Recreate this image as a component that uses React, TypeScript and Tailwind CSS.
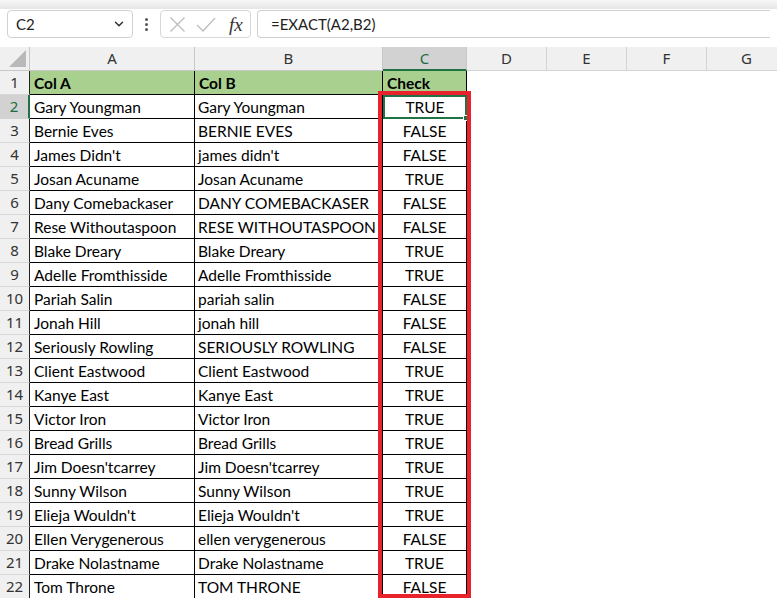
import { ChevronDown } from "lucide-react";

const rows: [string, string, string][] = [
  ["Gary Youngman", "Gary Youngman", "TRUE"],
  ["Bernie Eves", "BERNIE EVES", "FALSE"],
  ["James Didn't", "james didn't", "FALSE"],
  ["Josan Acuname", "Josan Acuname", "TRUE"],
  ["Dany Comebackaser", "DANY COMEBACKASER", "FALSE"],
  ["Rese Withoutaspoon", "RESE WITHOUTASPOON", "FALSE"],
  ["Blake Dreary", "Blake Dreary", "TRUE"],
  ["Adelle Fromthisside", "Adelle Fromthisside", "TRUE"],
  ["Pariah Salin", "pariah salin", "FALSE"],
  ["Jonah Hill", "jonah hill", "FALSE"],
  ["Seriously Rowling", "SERIOUSLY ROWLING", "FALSE"],
  ["Client Eastwood", "Client Eastwood", "TRUE"],
  ["Kanye East", "Kanye East", "TRUE"],
  ["Victor Iron", "Victor Iron", "TRUE"],
  ["Bread Grills", "Bread Grills", "TRUE"],
  ["Jim Doesn'tcarrey", "Jim Doesn'tcarrey", "TRUE"],
  ["Sunny Wilson", "Sunny Wilson", "TRUE"],
  ["Elieja Wouldn't", "Elieja Wouldn't", "TRUE"],
  ["Ellen Verygenerous", "ellen verygenerous", "FALSE"],
  ["Drake Nolastname", "Drake Nolastname", "TRUE"],
  ["Tom Throne", "TOM THRONE", "FALSE"],
];

const columns = ["D", "E", "F", "G"];

function FormulaBar() {
  return (
    <div className="flex h-[28px] items-stretch px-[7px] mt-[1px]">
      <div className="flex w-[126px] shrink-0 items-center justify-between rounded-[4px] border border-[#d1d1d1] pl-[8px] pr-[6px] text-[15px] text-[#222]">
        <span>C2</span>
        <ChevronDown size={14} strokeWidth={2.6} className="text-[#333]" />
      </div>
      <div className="flex w-[27px] shrink-0 flex-col items-center justify-center gap-[2px]">
        <span className="h-[3px] w-[3px] rounded-full bg-[#555]" />
        <span className="h-[3px] w-[3px] rounded-full bg-[#555]" />
        <span className="h-[3px] w-[3px] rounded-full bg-[#555]" />
      </div>
      <div className="flex w-[91px] shrink-0 items-center rounded-[4px] border border-[#d8d8d8] pl-[7px]">
        <svg width="17" height="17" viewBox="0 0 17 17" className="ml-[1px]">
          <path d="M1.5 1.5 L15.5 15.5 M15.5 1.5 L1.5 15.5" stroke="#bdbdbd" strokeWidth="1.3" fill="none" />
        </svg>
        <svg width="20" height="17" viewBox="0 0 20 17" className="ml-[10px]">
          <path d="M1 9 L7 15 L19 2" stroke="#bdbdbd" strokeWidth="1.3" fill="none" />
        </svg>
        <span className="ml-[13px] font-['Liberation_Serif',serif] text-[19px] italic leading-none text-[#333]">
          fx
        </span>
      </div>
      <div className="ml-[6px] flex flex-1 items-center rounded-l-[4px] border border-r-0 border-[#d1d1d1] pl-[13px] text-[15px] text-[#222]">
        =EXACT(A2,B2)
      </div>
    </div>
  );
}

function HeaderRow() {
  return (
    <div className="flex h-[24px] font-['Noto_Sans',sans-serif] text-[15px] text-[#333]">
      <div className="flex w-[30px] shrink-0 items-end justify-end border-r border-b border-[#c8c8c8] bg-[#f0f0f0] pb-[3px] pr-[3px]">
        <svg width="17" height="17" viewBox="0 0 17 17">
          <path d="M17 0 L17 17 L0 17 Z" fill="#b9b9b9" />
        </svg>
      </div>
      <div className="flex w-[165px] shrink-0 items-center justify-center border-r border-b border-[#c8c8c8] bg-[#f0f0f0]">A</div>
      <div className="flex w-[188px] shrink-0 items-center justify-center border-r border-b border-[#c8c8c8] bg-[#f0f0f0]">B</div>
      <div className="flex w-[84px] shrink-0 items-center justify-center border-r border-b-2 border-r-[#c8c8c8] border-b-[#217346] bg-[#d2d2d2] text-[#1e6b45]">
        C
      </div>
      {columns.map((c) => (
        <div
          key={c}
          className="flex w-[80px] shrink-0 items-center justify-center border-r border-b border-[#d4d4d4] bg-[#f0f0f0]"
        >
          {c}
        </div>
      ))}
      <div className="flex-1 border-b border-[#d4d4d4] bg-[#f0f0f0]" />
    </div>
  );
}

function RowNum({ n, active }: { n: number; active?: boolean }) {
  return (
    <div
      className={
        active
          ? "flex w-[30px] shrink-0 items-center justify-center border-b border-r-2 border-b-[#d0d0d0] border-r-[#217346] bg-[#d2d2d2] font-['Noto_Sans',sans-serif] text-[15px] text-[#1e6b45]"
          : "flex w-[30px] shrink-0 items-center justify-center border-b border-r border-b-[#d8d8d8] border-r-[#222] bg-[#f0f0f0] font-['Noto_Sans',sans-serif] text-[15px] text-[#333]"
      }
    >
      {n}
    </div>
  );
}

export default function App() {
  return (
    <div className="h-[598px] w-[777px] overflow-hidden bg-white font-['Lato',sans-serif] text-black">
      <div className="h-[9px] bg-gradient-to-b from-[#f7f7f7] to-[#e6e6e6]" />
      <FormulaBar />
      <div className="relative mt-[9px]">
        <HeaderRow />
        <div className="flex h-[24px]">
          <RowNum n={1} />
          <div className="flex w-[165px] shrink-0 items-center border-r border-b border-black bg-[#a9d08e] pl-[4px] pt-[2px] text-[15.5px] font-bold">
            Col A
          </div>
          <div className="flex w-[188px] shrink-0 items-center border-r border-b border-black bg-[#a9d08e] pl-[4px] pt-[2px] text-[15.5px] font-bold">
            Col B
          </div>
          <div className="flex w-[84px] shrink-0 items-center border-r border-b border-black bg-[#a9d08e] pl-[4px] pt-[2px] text-[15.5px] font-bold">
            Check
          </div>
        </div>
        {rows.map((r, i) => {
          const n = i + 2;
          const active = n === 2;
          return (
            <div key={n} className="flex h-[24px]">
              <RowNum n={n} active={active} />
              <div className="flex w-[165px] shrink-0 items-center overflow-hidden whitespace-nowrap border-r border-b border-black pl-[4px] pt-[2px] text-[15.5px]">
                {r[0]}
              </div>
              <div className="flex w-[188px] shrink-0 items-center overflow-hidden whitespace-nowrap border-r border-b border-black pl-[3px] pt-[2px] text-[15.5px]">
                {r[1]}
              </div>
              <div
                className={
                  active
                    ? "relative flex w-[84px] shrink-0 items-center justify-center border-2 border-[#217346] pt-[1px] text-[15.5px]"
                    : "flex w-[84px] shrink-0 items-center justify-center border-r border-b border-black pt-[2px] text-[15.5px]"
                }
              >
                {r[2]}
                {active && (
                  <span className="absolute -right-[4px] -bottom-[4px] h-[6px] w-[6px] border border-white bg-[#217346]" />
                )}
              </div>
            </div>
          );
        })}
        <div className="pointer-events-none absolute left-[378px] top-[44px] h-[507px] w-[93px] border-4 border-[#e8232b]" />
      </div>
    </div>
  );
}
